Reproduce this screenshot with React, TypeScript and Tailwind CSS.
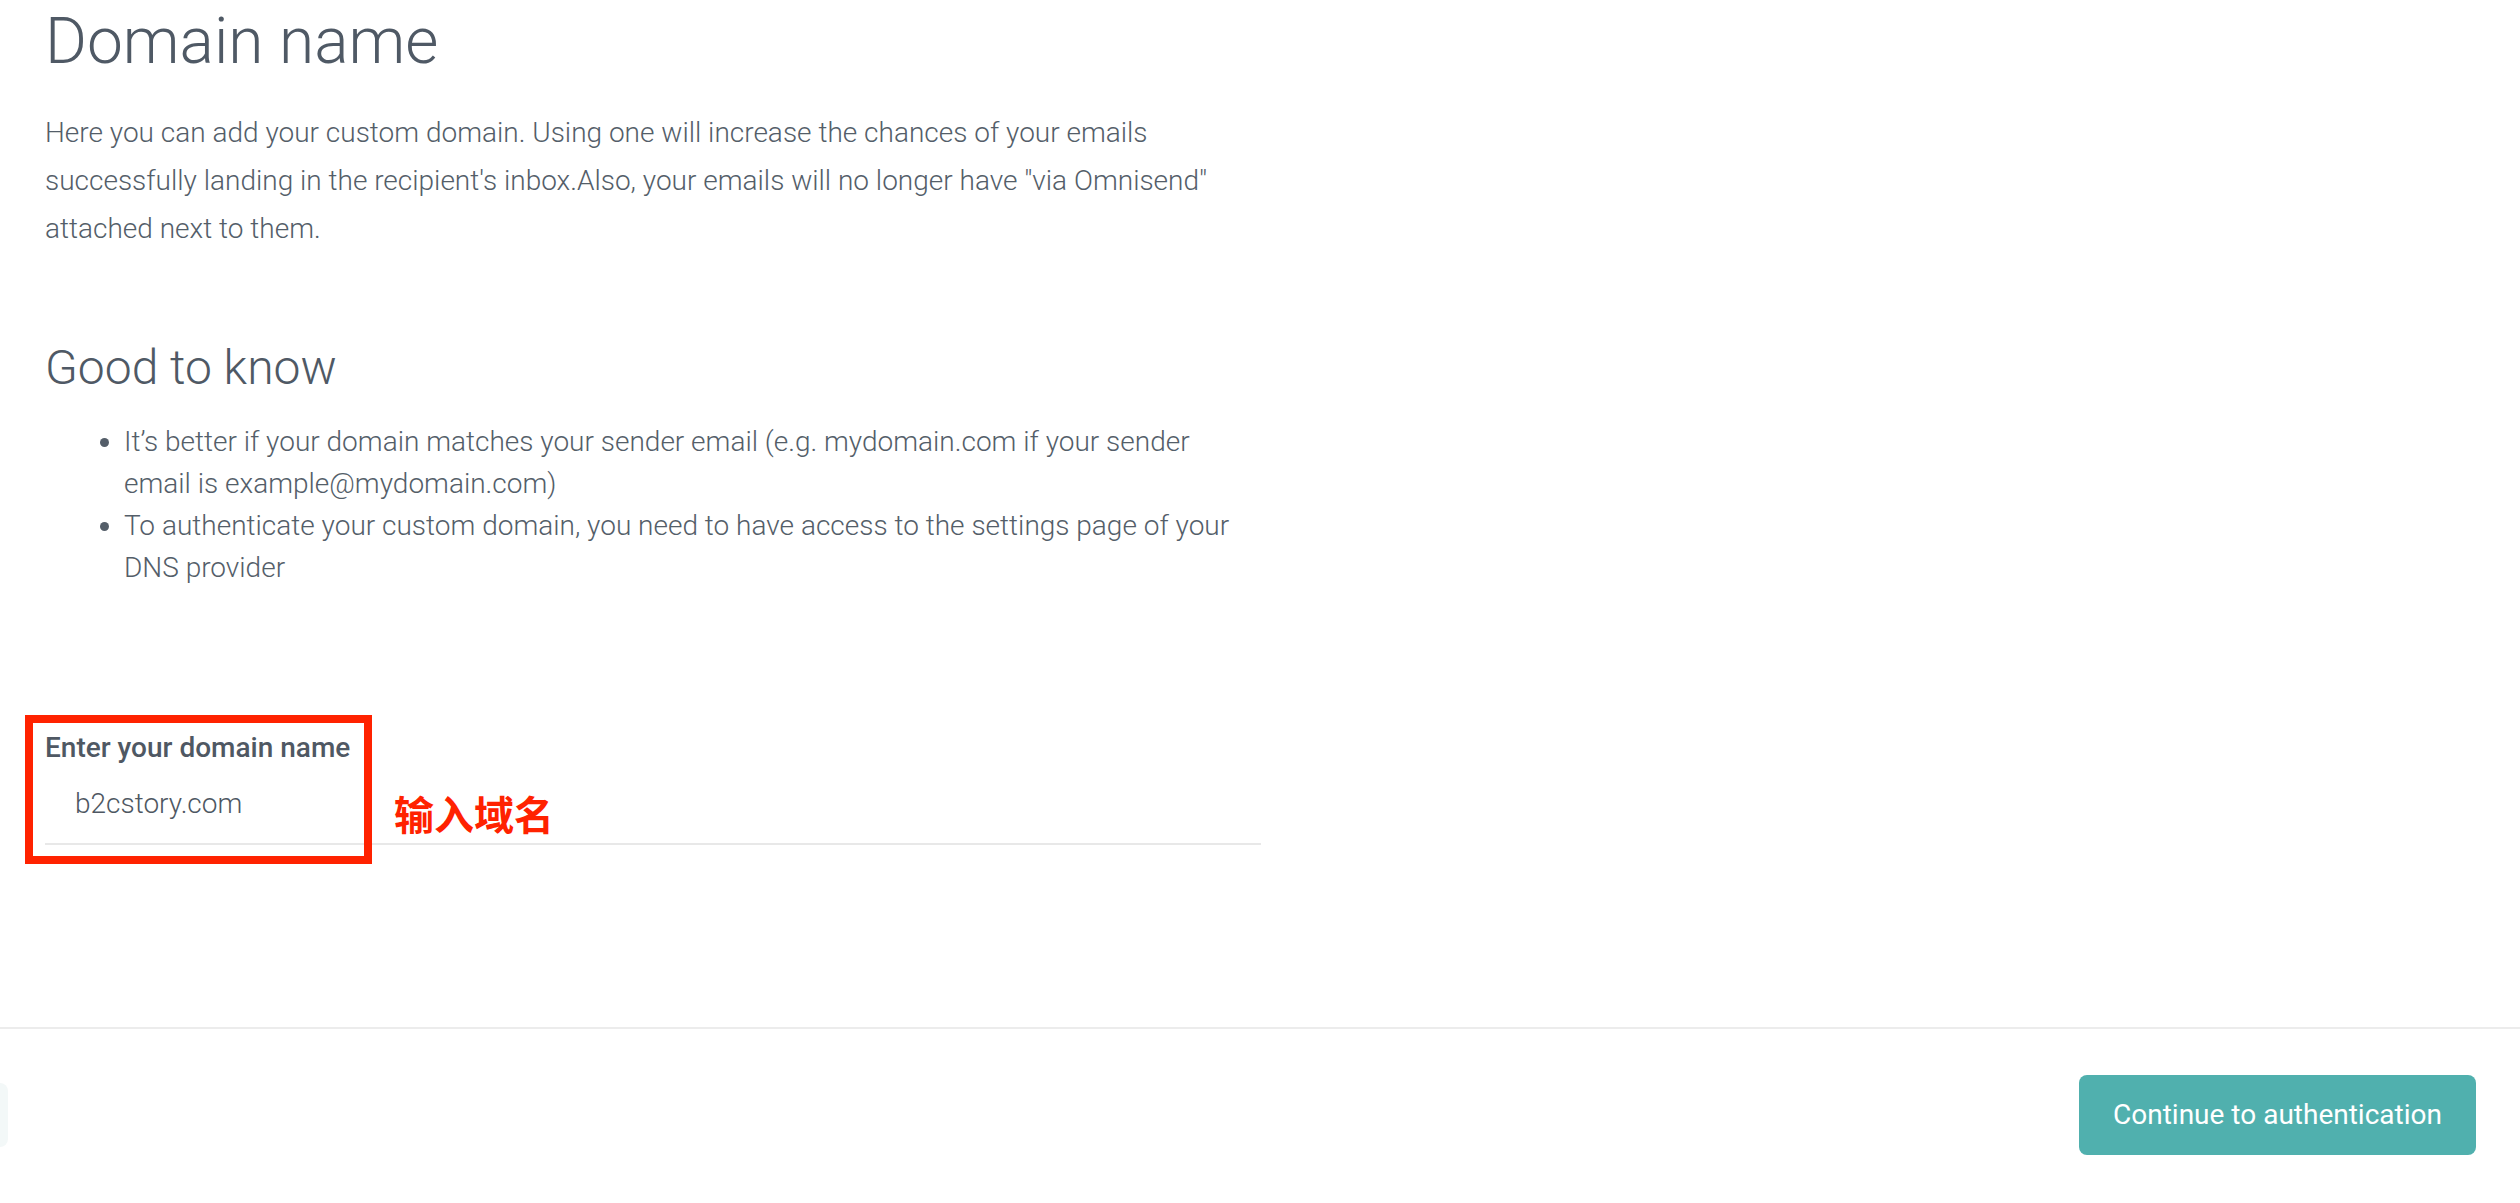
const font = { fontFamily: "Roboto, 'Noto Sans CJK SC', sans-serif" }

const App = () => {
    return (
        <div className="min-h-screen w-full bg-white text-[#56606b]" style={font}>

            {/* CONTENT */}
            <div className="pl-[45px] pt-[4px] w-[1261px]">
                <h1 className="text-[64px] leading-[76px] font-light text-[#4f5965]">Domain name</h1>
                <p className="mt-[29px] w-[1200px] text-[28px] leading-[48px] font-light text-[#545e69]">
                    Here you can add your custom domain. Using one will increase the chances of your emails successfully landing in the recipient's inbox.Also, your emails will no longer have "via Omnisend" attached next to them.
                </p>

                <h2 className="mt-[87px] text-[48px] leading-[56px] font-light text-[#4f5965]">Good to know</h2>
                <ul className="mt-[25px] w-[1200px] pl-[79px] list-disc text-[28px] leading-[42px] font-light text-[#545e69]">
                    <li>It’s better if your domain matches your sender email (e.g. mydomain.com if your sender email is example@mydomain.com)</li>
                    <li>To authenticate your custom domain, you need to have access to the settings page of your DNS provider</li>
                </ul>

                {/* FIELD */}
                <div className="relative mt-[142px]">
                    <label className="block text-[28px] leading-[34px] font-medium text-[#4f5863]">Enter your domain name</label>
                    <input
                        readOnly
                        value="b2cstory.com"
                        className="block w-full mt-[22px] pl-[30px] pb-[22px] text-[28px] leading-[34px] font-light text-[#4e5762] border-b-2 border-[#e8e8e8] outline-none bg-transparent"
                    />
                    {/* annotation */}
                    <div className="absolute left-[-20px] top-[-16px] w-[347px] h-[149px] border-[8px] border-[#ff2200]" />
                    <span className="absolute left-[349px] top-[58px] text-[40px] leading-[48px] font-bold text-[#ff2200] whitespace-nowrap" style={{ fontFamily: "'Noto Sans CJK SC', sans-serif" }}>输入域名</span>
                </div>
            </div>

            {/* FOOTER */}
            <div className="mt-[182px] border-t-2 border-[#ececec]">
                <div className="flex items-center justify-between pt-[46px] pr-[44px]">
                    <div className="w-[8px] h-[64px] rounded-r-full bg-[#f3f8f8]" />
                    <button className="w-[397px] h-[80px] rounded-[8px] bg-[#50b0ae] text-white text-[28px]">Continue to authentication</button>
                </div>
            </div>
        </div>
    )
}

export default App
